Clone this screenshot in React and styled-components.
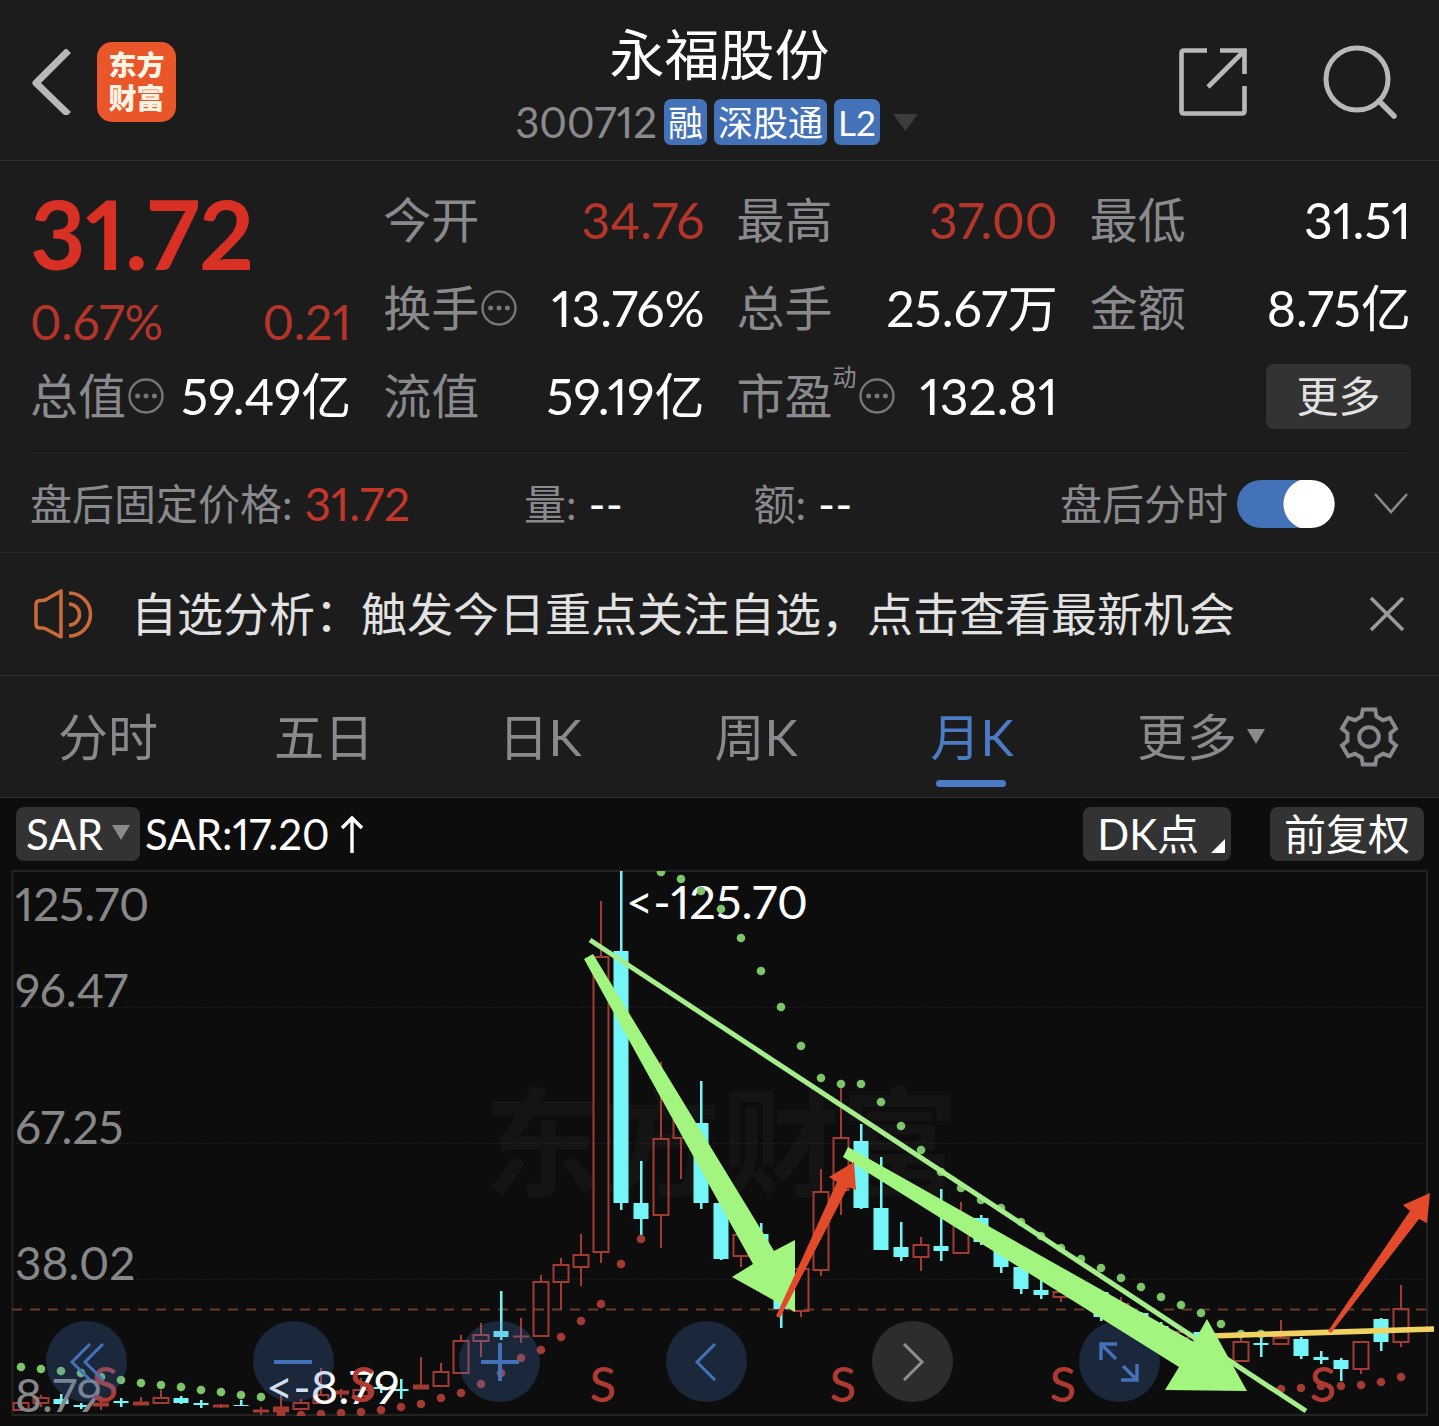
import React, { useState } from 'react';
import styled, { createGlobalStyle } from 'styled-components';

const GlobalStyle = createGlobalStyle`
  * {
    box-sizing: border-box;
  }

  body {
    margin: 0;
    background: #0d0d0d;
    color: #ffffff;
    font-family: Lato, 'Noto Sans CJK SC', sans-serif;
    font-variant-numeric: proportional-nums;
    line-height: 1.2;
  }

  button, select, input {
    font: inherit;
    color: inherit;
  }

  button {
    border: 0;
    padding: 0;
    background: none;
    cursor: pointer;
  }

  svg {
    display: block;
  }
`;

const Page = styled.main`
  display: flex;
  flex-direction: column;
  width: 100%;
`;

const Header = styled.header`
  display: grid;
  grid-template-columns: 1fr auto 1fr;
  align-items: center;
  height: 161px;
  padding: 0 30px;
  background: #1c1c1c;
  border-bottom: 1px solid #303030;
`;

const HeaderSide = styled.div`
  display: flex;
  align-items: center;
  justify-content: ${(props) => (props.$end ? 'flex-end' : 'flex-start')};
  gap: ${(props) => (props.$end ? '76px' : '26px')};
  padding: ${(props) => (props.$end ? '4px 11px 0 0' : '4px 0 0')};
`;

const Logo = styled.a`
  width: 79px;
  height: 80px;
  padding-top: 7px;
  border-radius: 15px;
  background: #e8562a;
  color: #fff3e4;
  font-size: 28px;
  font-weight: 900;
  line-height: 33px;
  text-align: center;
  text-decoration: none;
`;

const TitleBlock = styled.div`
  display: flex;
  flex-direction: column;
  align-items: center;
  gap: 6px;
`;

const StockName = styled.h1`
  margin: 0;
  font-size: 55px;
  font-weight: 400;
  line-height: 78px;
`;

const StockMeta = styled.div`
  display: flex;
  align-items: center;
  gap: 7px;
  height: 46px;
`;

const StockCode = styled.span`
  color: #8a8a8e;
  font-size: 42px;
`;

const Tag = styled.span`
  padding: 0 4px;
  border-radius: 7px;
  background: #4472b8;
  font-size: 35px;
  line-height: 46px;
`;

const CaretButton = styled.button`
  padding: 6px;
`;

const Quote = styled.section`
  display: grid;
  grid-template-columns: repeat(4, 1fr);
  grid-auto-rows: 88px;
  column-gap: 32px;
  padding: 15px 28px 13px 30px;
  background: #1c1c1c;
`;

const PriceBlock = styled.div`
  grid-row: span 2;
  display: flex;
  flex-direction: column;
  color: #d93025;
`;

const Price = styled.strong`
  font-size: 96px;
  font-weight: 700;
  line-height: 114px;
`;

const Change = styled.div`
  display: flex;
  justify-content: space-between;
  color: #b5352b;
  font-size: 48px;
  line-height: 64px;
`;

const Stat = styled.div`
  display: flex;
  align-items: center;
  justify-content: space-between;
  white-space: nowrap;
`;

const StatLabel = styled.span`
  display: flex;
  align-items: center;
  color: #8a8a8e;
  font-size: 48px;

  sup {
    align-self: flex-start;
    font-size: 24px;
    line-height: 20px;
  }
`;

const StatValue = styled.span`
  color: ${(props) => (props.$up ? '#b5352b' : '#ffffff')};
  font-size: 50px;
`;

const InfoButton = styled.button`
  margin-left: 2px;
`;

const MoreButton = styled.button`
  align-self: center;
  justify-self: end;
  width: 145px;
  height: 65px;
  border-radius: 8px;
  background: #333333;
  color: #e2e2e2;
  font-size: 42px;
`;

const AfterHours = styled.section`
  display: grid;
  grid-template-columns: 495fr 230fr 307fr auto;
  align-items: center;
  height: 99px;
  margin: 0;
  padding: 2px 30px 0;
  background: #1c1c1c;
  border-bottom: 1px solid #272727;
  color: #8a8a8e;
  font-size: 42px;
  white-space: nowrap;
`;

const Divider = styled.hr`
  width: 100%;
  height: 1px;
  margin: 0;
  border: 0;
  background: linear-gradient(to right, #1c1c1c 30px, #272727 30px calc(100% - 28px), #1c1c1c 0);
`;

const AfterItem = styled.span`
  display: flex;
  align-items: center;
  gap: 12px;
`;

const AfterValue = styled.span`
  color: ${(props) => (props.$up ? '#c4352a' : '#ffffff')};
  font-size: 46px;
`;

const SwitchLabel = styled.label`
  display: flex;
  align-items: center;
  gap: 9px;
`;

const Switch = styled.input`
  appearance: none;
  width: 98px;
  height: 48px;
  margin: 0;
  border-radius: 24px;
  background: radial-gradient(circle at 24px 24px, #ffffff 25px, transparent 26px) #555555;
  cursor: pointer;

  &:checked {
    background: radial-gradient(circle at 72px 24px, #ffffff 25px, transparent 26px) #4472b8;
  }
`;

const AfterControls = styled.div`
  display: flex;
  align-items: center;
  gap: 38px;
`;

const Notice = styled.section`
  display: flex;
  align-items: center;
  height: 123px;
  padding: 0 33px;
  background: #1c1c1c;
  border-bottom: 1px solid #303030;
`;

const NoticeText = styled.a`
  flex: 1;
  margin-left: 34px;
  color: #e2e2e2;
  font-size: 46px;
  text-decoration: none;
  white-space: nowrap;
`;

const Tabs = styled.nav`
  display: grid;
  grid-template-columns: repeat(5, 216fr) 242fr 93fr;
  height: 122px;
  padding-right: 24px;
  background: #1c1c1c;
  border-bottom: 1px solid #303030;
`;

const Tab = styled.button`
  position: relative;
  display: flex;
  align-items: center;
  justify-content: center;
  gap: 10px;
  color: ${(props) => (props.$active ? '#4a7bc4' : '#8a8a8e')};
  font-size: 50px;

  &::after {
    content: '';
    position: absolute;
    bottom: 10px;
    left: 50%;
    width: 70px;
    height: 7px;
    margin-left: -36px;
    border-radius: 4px;
    background: ${(props) => (props.$active ? '#4a7bc4' : 'transparent')};
  }
`;

const ChartToolbar = styled.div`
  display: flex;
  align-items: center;
  height: 68px;
  padding: 4px 15px 0 16px;
  font-size: 42px;
`;

const IndicatorSelect = styled.select`
  appearance: none;
  width: 124px;
  height: 54px;
  padding: 0 10px;
  border: 0;
  border-radius: 8px;
  background: #333333;
  line-height: 54px;
`;

const SelectWrap = styled.label`
  position: relative;

  svg {
    position: absolute;
    top: 18px;
    right: 10px;
    pointer-events: none;
  }
`;

const IndicatorValue = styled.span`
  display: flex;
  align-items: center;
  flex: 1;
  gap: 10px;
  margin-left: 5px;
`;

const ChartButton = styled.button`
  display: flex;
  align-items: center;
  height: 54px;
  margin-left: 39px;
  padding: 0 14px;
  border-radius: 8px;
  background: #333333;
  font-size: 42px;

  svg {
    align-self: flex-end;
    margin: 0 -8px 8px 12px;
  }
`;

const ChartArea = styled.section`
  position: relative;
`;

const ChartSvg = styled.svg`
  width: 100%;
  height: auto;
`;

const MarkupSvg = styled.svg`
  position: absolute;
  inset: 0;
  width: 100%;
  pointer-events: none;
`;

const ChartControls = styled.div`
  position: absolute;
  bottom: 24px;
  left: 3.2%;
  right: 19.4%;
  display: flex;
  justify-content: space-between;
`;

const RoundButton = styled.button`
  display: grid;
  place-items: center;
  width: 81px;
  height: 81px;
  border-radius: 50%;
  background: ${(props) => (props.$muted ? 'rgba(145, 145, 145, 0.25)' : 'rgba(71, 120, 200, 0.25)')};
`;

const GREEN = '#7cc568';
const RED = '#a33a33';
const CYAN = '#74f6f8';

// [type, wick top, body top, body bottom, wick bottom], one per month
// type: u = hollow up, f = flat up, d = filled down, x = hidden
const candles = [
  ['u', 1402, 1403, 1410, 1411],
  ['u', 1395, 1398, 1403, 1407],
  ['d', 1394, 1399, 1404, 1407],
  ['d', 1403, 1405, 1407, 1409],
  ['f', 1396, 1403, 1406, 1410],
  ['d', 1398, 1401, 1403, 1407],
  ['f', 1397, 1402, 1405, 1405],
  ['u', 1390, 1398, 1403, 1403],
  ['d', 1396, 1398, 1403, 1404],
  ['d', 1400, 1403, 1405, 1408],
  ['f', 1404, 1405, 1407, 1408],
  ['d', 1400, 1405, 1406, 1406],
  ['f', 1407, 1410, 1412, 1415],
  ['f', 1395, 1407, 1412, 1414],
  ['u', 1399, 1403, 1409, 1409],
  ['u', 1368, 1395, 1403, 1403],
  ['f', 1389, 1391, 1394, 1398],
  ['u', 1378, 1390, 1396, 1400],
  ['d', 1384, 1387, 1389, 1393],
  ['d', 1379, 1389, 1391, 1399],
  ['f', 1357, 1385, 1389, 1389],
  ['u', 1363, 1372, 1386, 1386],
  ['u', 1335, 1341, 1373, 1373],
  ['u', 1323, 1335, 1341, 1357],
  ['d', 1291, 1331, 1337, 1340],
  ['f', 1318, 1336, 1337, 1343],
  ['u', 1275, 1282, 1336, 1337],
  ['u', 1258, 1265, 1282, 1310],
  ['u', 1234, 1255, 1267, 1286],
  ['u', 901, 957, 1252, 1263],
  ['d', 871, 951, 1203, 1210],
  ['d', 1161, 1203, 1219, 1236],
  ['u', 1062, 1139, 1215, 1248],
  ['u', 1112, 1120, 1138, 1179],
  ['d', 1081, 1123, 1203, 1209],
  ['d', 1203, 1203, 1259, 1260],
  ['u', 1234, 1235, 1256, 1267],
  ['d', 1223, 1234, 1260, 1262],
  ['d', 1290, 1290, 1309, 1328],
  ['u', 1268, 1269, 1311, 1317],
  ['u', 1169, 1192, 1270, 1276],
  ['u', 1088, 1138, 1190, 1215],
  ['d', 1124, 1141, 1208, 1209],
  ['d', 1157, 1208, 1250, 1250],
  ['d', 1222, 1247, 1257, 1261],
  ['u', 1237, 1245, 1257, 1271],
  ['d', 1189, 1246, 1251, 1261],
  ['u', 1202, 1226, 1253, 1253],
  ['d', 1215, 1218, 1242, 1245],
  ['d', 1240, 1242, 1267, 1273],
  ['d', 1266, 1267, 1289, 1294],
  ['d', 1280, 1290, 1295, 1299],
  ['u', 1290, 1292, 1297, 1302],
  ['x', 0, 0, 0, 0],
  ['d', 1291, 1292, 1317, 1321],
  ['u', 1297, 1304, 1310, 1312],
  ['d', 1312, 1313, 1325, 1327],
  ['d', 1322, 1326, 1332, 1334],
  ['u', 1330, 1332, 1338, 1340],
  ['d', 1331, 1332, 1345, 1347],
  ['x', 0, 0, 0, 0],
  ['u', 1338, 1342, 1361, 1362],
  ['d', 1337, 1343, 1345, 1357],
  ['u', 1320, 1338, 1344, 1344],
  ['d', 1337, 1339, 1356, 1359],
  ['d', 1351, 1357, 1360, 1364],
  ['d', 1358, 1360, 1369, 1381],
  ['u', 1341, 1342, 1369, 1374],
  ['d', 1318, 1319, 1342, 1351],
  ['u', 1285, 1309, 1342, 1347],
];

const sarEarly = [1367, 1369, 1371, 1373, 1377, 1380, 1383, 1385, 1387, 1390, 1392, 1395, 1397];
const sarRise = [
  1414, 1415, 1414, 1413, 1412, 1410, 1407, 1404, 1398, 1393, 1384, 1373, 1358, 1350, 1337, 1321,
  1304, 1264, 1239,
];
const sarFall = [
  872, 879, 891, 909, 938, 971, 1007, 1046, 1078, 1084, 1084, 1102, 1126, 1150, 1172, 1188, 1200,
  1208, 1222, 1236, 1248, 1259, 1268, 1278, 1287, 1297, 1305, 1313, 1324, 1334, 1334,
];
const sarLate = [1389, 1388, 1386, 1386, 1385, 1382, 1377];

const sarSeries = [
  { start: 0, color: GREEN, values: sarEarly },
  { start: 13, color: RED, values: sarRise },
  { start: 32, color: GREEN, values: sarFall },
  { start: 63, color: RED, values: sarLate },
];

const axisLabels = [
  ['125.70', 921],
  ['96.47', 1007],
  ['67.25', 1144],
  ['38.02', 1280],
  ['8.79', 1412],
];

const sellMarks = [105, 363, 603, 843, 1063, 1323];

const monthX = (index) => 21 + index * 20;

const VIEW_BOX = '0 866 1439 560';

const Candle = ({ x, data }) => {
  const [type, high, top, bottom, low] = data;
  if (type === 'x') return null;
  if (type === 'd') {
    return (
      <g fill={CYAN}>
        <rect x={x - 1} y={high} width="2.5" height={low - high} />
        <rect x={x - 7.5} y={top} width="15" height={bottom - top} />
      </g>
    );
  }
  return (
    <g stroke={RED} strokeWidth="2" fill="none">
      <path d={`M${x} ${high}V${top}M${x} ${bottom}V${low}`} />
      <rect
        x={x - 7.5}
        y={top}
        width="15"
        height={bottom - top}
        fill={type === 'f' ? RED : 'none'}
        strokeWidth={type === 'f' ? 1 : 2}
      />
    </g>
  );
};

const Chart = () => (
  <ChartSvg viewBox={VIEW_BOX} role="img" aria-label="月K">
    <defs>
      <clipPath id="plot">
        <rect x="12" y="871" width="1416" height="545" />
      </clipPath>
    </defs>
    <text x="483" y="1188" fontSize="119" fontWeight="700" fill="#141414">东方财富</text>
    <rect x="12.5" y="871" width="1414.5" height="544" fill="none" stroke="#232323" strokeWidth="2" />
    <path
      d="M13 1007.5H1427M13 1143.5H1427M13 1279.5H1427"
      stroke="#2c2c2c"
      strokeWidth="1"
      strokeDasharray="1 2"
    />
    <path d="M12 1309.5H1427" stroke="#6b3d20" strokeWidth="2" strokeDasharray="10 8" />
    <g clipPath="url(#plot)">
      {candles.map((data, i) => (
        <Candle key={i} x={monthX(i)} data={data} />
      ))}
    </g>
    <g fontSize="46" fill="#87878a">
      {axisLabels.map(([label, y]) => (
        <text key={label} x="15" y={y}>{label}</text>
      ))}
    </g>
    <g fontSize="47" fill="#ffffff">
      <text x="626" y="919">&lt;-125.70</text>
      <text x="266" y="1404">&lt;-8.79</text>
    </g>
    <g clipPath="url(#plot)">
      {sarSeries.map((series) =>
        series.values.map((y, i) => (
          <circle key={monthX(series.start + i)} cx={monthX(series.start + i)} cy={y} r="4.3" fill={series.color} />
        ))
      )}
    </g>
    <g fontSize="49" fontWeight="500" fill="#b03a32" textAnchor="middle">
      {sellMarks.map((x) => (
        <text key={x} x={x} y="1402">S</text>
      ))}
    </g>
  </ChartSvg>
);

const Markup = () => (
  <MarkupSvg viewBox={VIEW_BOX} aria-hidden="true">
    <path d="M1210 1336L1434 1329" stroke="#f0d262" strokeWidth="5.5" />
    <path d="M590 940L1306 1411" stroke="#a6ee8c" strokeWidth="5" />
    <g fill="#a2f67f">
      <path d="M584 959L593 954L774 1251L795 1240V1312L732 1277L753 1264Z" />
      <path d="M848 1147L1194 1342L1207 1319L1247 1391L1165 1390L1179 1367L843 1157Z" />
    </g>
    <g fill="#e24a2a">
      <path d="M776 1316L837 1182L829 1177L854 1162L856 1190L848 1187L780 1318Z" />
      <path d="M1328 1331L1410 1211L1403 1205L1430 1193L1427 1223L1419 1219L1331 1333Z" />
    </g>
  </MarkupSvg>
);

const Caret = ({ width = 18, height = 15, color = '#8a8a8e' }) => (
  <svg width={width} height={height} viewBox="0 0 18 15" preserveAspectRatio="none" aria-hidden="true">
    <path d="M0 0H18L9 15Z" fill={color} />
  </svg>
);

const Info = () => (
  <InfoButton type="button" aria-label="说明">
    <svg width="36" height="36" viewBox="0 0 36 36" fill="#77777a">
      <circle cx="18" cy="18" r="16.5" fill="none" stroke="#77777a" strokeWidth="2.4" />
      <circle cx="9.6" cy="18" r="2.5" />
      <circle cx="18" cy="18" r="2.5" />
      <circle cx="26.4" cy="18" r="2.5" />
    </svg>
  </InfoButton>
);

const Gear = () => {
  const tooth = [[-7.5, -20.5], [-6.2, -27.6], [6.2, -27.6], [7.5, -20.5]];
  const points = [0, 1, 2, 3, 4, 5].flatMap((k) => {
    const a = (k * Math.PI) / 3;
    return tooth.map(([x, y]) =>
      `${(x * Math.cos(a) - y * Math.sin(a)).toFixed(2)},${(x * Math.sin(a) + y * Math.cos(a)).toFixed(2)}`
    );
  });
  return (
    <svg width="60" height="60" viewBox="-30 -30 60 60" fill="none" stroke="#8a8a8e" strokeWidth="4">
      <polygon points={points.join(' ')} />
      <circle r="9.8" />
    </svg>
  );
};

const App = () => {
  const [afterHours, setAfterHours] = useState(true);
  const [period, setPeriod] = useState('月K');

  return (
    <Page>
      <GlobalStyle />
      <Header>
        <HeaderSide>
          <button type="button" aria-label="返回">
            <svg width="41" height="66" viewBox="0 0 41 66" fill="none" stroke="#b8b8b8" strokeWidth="7">
              <path d="M36 4L6 34L36 63" strokeLinejoin="round" strokeLinecap="square" />
            </svg>
          </button>
          <Logo href="#home">东方<br />财富</Logo>
        </HeaderSide>
        <TitleBlock>
          <StockName>永福股份</StockName>
          <StockMeta>
            <StockCode>300712</StockCode>
            <Tag>融</Tag>
            <Tag>深股通</Tag>
            <Tag>L2</Tag>
            <CaretButton type="button" aria-label="展开">
              <Caret width={25} height={17} color="#3c3c3c" />
            </CaretButton>
          </StockMeta>
        </TitleBlock>
        <HeaderSide $end>
          <button type="button" aria-label="分享">
            <svg width="68" height="68" viewBox="0 0 68 68" fill="none" stroke="#b8b8b8" strokeWidth="4.6">
              <path d="M28 2.5H5Q2.5 2.5 2.5 5V63Q2.5 65.5 5 65.5H63Q65.5 65.5 65.5 63V38" />
              <path d="M41 2.5H65.5V26M65 3L29 39" />
            </svg>
          </button>
          <button type="button" aria-label="搜索">
            <svg width="75" height="75" viewBox="0 0 75 75" fill="none" stroke="#b8b8b8" strokeWidth="5">
              <circle cx="34" cy="34" r="31" />
              <path d="M56 56L71 71" strokeWidth="5.5" strokeLinecap="round" />
            </svg>
          </button>
        </HeaderSide>
      </Header>

      <Quote>
        <PriceBlock>
          <Price>31.72</Price>
          <Change><span>0.67%</span><span>0.21</span></Change>
        </PriceBlock>
        <Stat><StatLabel>今开</StatLabel><StatValue $up>34.76</StatValue></Stat>
        <Stat><StatLabel>最高</StatLabel><StatValue $up>37.00</StatValue></Stat>
        <Stat><StatLabel>最低</StatLabel><StatValue>31.51</StatValue></Stat>
        <Stat><StatLabel>换手<Info /></StatLabel><StatValue>13.76%</StatValue></Stat>
        <Stat><StatLabel>总手</StatLabel><StatValue>25.67万</StatValue></Stat>
        <Stat><StatLabel>金额</StatLabel><StatValue>8.75亿</StatValue></Stat>
        <Stat><StatLabel>总值<Info /></StatLabel><StatValue>59.49亿</StatValue></Stat>
        <Stat><StatLabel>流值</StatLabel><StatValue>59.19亿</StatValue></Stat>
        <Stat><StatLabel>市盈<sup>动</sup><Info /></StatLabel><StatValue>132.81</StatValue></Stat>
        <MoreButton type="button">更多</MoreButton>
      </Quote>
      <Divider />

      <AfterHours>
        <AfterItem>盘后固定价格: <AfterValue $up>31.72</AfterValue></AfterItem>
        <AfterItem>量: <AfterValue>--</AfterValue></AfterItem>
        <AfterItem>额: <AfterValue>--</AfterValue></AfterItem>
        <AfterControls>
          <SwitchLabel>
            盘后分时
            <Switch type="checkbox" checked={afterHours} onChange={(e) => setAfterHours(e.target.checked)} />
          </SwitchLabel>
          <button type="button" aria-label="展开盘后">
            <svg width="36" height="24" viewBox="0 0 36 24" fill="none" stroke="#8a8a8e" strokeWidth="2.6">
              <path d="M2 2L18 20L34 2" />
            </svg>
          </button>
        </AfterControls>
      </AfterHours>

      <Notice>
        <svg width="64" height="50" viewBox="24 18 64 50" fill="none" stroke="#c96a38" strokeWidth="3.6">
          <path d="M52 20V66L37 58Q35 57 33 57H31Q27 57 27 53V34Q27 29.500 31 29.500H34Q36 29.500 38 28Z" strokeLinejoin="round" />
          <path d="M60 22A21.500 21.500 0 0 1 60 65M60 33A10.500 10.500 0 0 1 60 54" />
        </svg>
        <NoticeText href="#analysis">自选分析：触发今日重点关注自选，点击查看最新机会</NoticeText>
        <button type="button" aria-label="关闭">
          <svg width="38" height="36" viewBox="0 0 38 36" fill="none" stroke="#9a9a9a" strokeWidth="3.6">
            <path d="M3 2L35 34M35 2L3 34" />
          </svg>
        </button>
      </Notice>

      <Tabs>
        {['分时', '五日', '日K', '周K', '月K'].map((name) => (
          <Tab key={name} type="button" $active={name === period} onClick={() => setPeriod(name)}>
            {name}
          </Tab>
        ))}
        <Tab type="button">更多<Caret /></Tab>
        <Tab type="button" aria-label="设置"><Gear /></Tab>
      </Tabs>

      <ChartToolbar>
        <SelectWrap>
          <IndicatorSelect aria-label="指标" defaultValue="SAR">
            <option>SAR</option>
          </IndicatorSelect>
          <Caret />
        </SelectWrap>
        <IndicatorValue>
          SAR:17.20
          <svg width="24" height="38" viewBox="0 0 24 38" fill="none" stroke="#ffffff" strokeWidth="3.4">
            <path d="M12 38V3M2 13L12 3L22 13" />
          </svg>
        </IndicatorValue>
        <ChartButton type="button">
          DK点
          <svg width="14" height="14" viewBox="0 0 14 14"><path d="M14 0V14H0Z" fill="#ffffff" /></svg>
        </ChartButton>
        <ChartButton type="button">前复权</ChartButton>
      </ChartToolbar>

      <ChartArea>
        <Chart />
        <ChartControls>
          <RoundButton type="button" aria-label="最早">
            <svg width="34" height="38" viewBox="0 0 34 38" fill="none" stroke="#4472b8" strokeWidth="3">
              <path d="M20 1L2 19L20 37M33 1L15 19L33 37" />
            </svg>
          </RoundButton>
          <RoundButton type="button" aria-label="缩小">
            <svg width="40" height="40" viewBox="0 0 40 40" stroke="#4472b8" strokeWidth="4">
              <path d="M1 20H39" />
            </svg>
          </RoundButton>
          <RoundButton type="button" aria-label="放大">
            <svg width="40" height="40" viewBox="0 0 40 40" stroke="#4472b8" strokeWidth="4">
              <path d="M1 20H39M20 1V39" />
            </svg>
          </RoundButton>
          <RoundButton type="button" aria-label="向前">
            <svg width="24" height="38" viewBox="0 0 24 38" fill="none" stroke="#4472b8" strokeWidth="3">
              <path d="M21 1L3 19L21 37" />
            </svg>
          </RoundButton>
          <RoundButton type="button" aria-label="向后" $muted>
            <svg width="24" height="38" viewBox="0 0 24 38" fill="none" stroke="#8f8f8f" strokeWidth="3">
              <path d="M3 1L21 19L3 37" />
            </svg>
          </RoundButton>
          <RoundButton type="button" aria-label="全屏">
            <svg width="40" height="40" viewBox="0 0 40 40" fill="none" stroke="#4472b8" strokeWidth="3.4">
              <path d="M18 2H2V18M2 2L17 17M38 22V38H22M38 38L24 24" />
            </svg>
          </RoundButton>
        </ChartControls>
        <Markup />
      </ChartArea>
    </Page>
  );
};

export default App;
